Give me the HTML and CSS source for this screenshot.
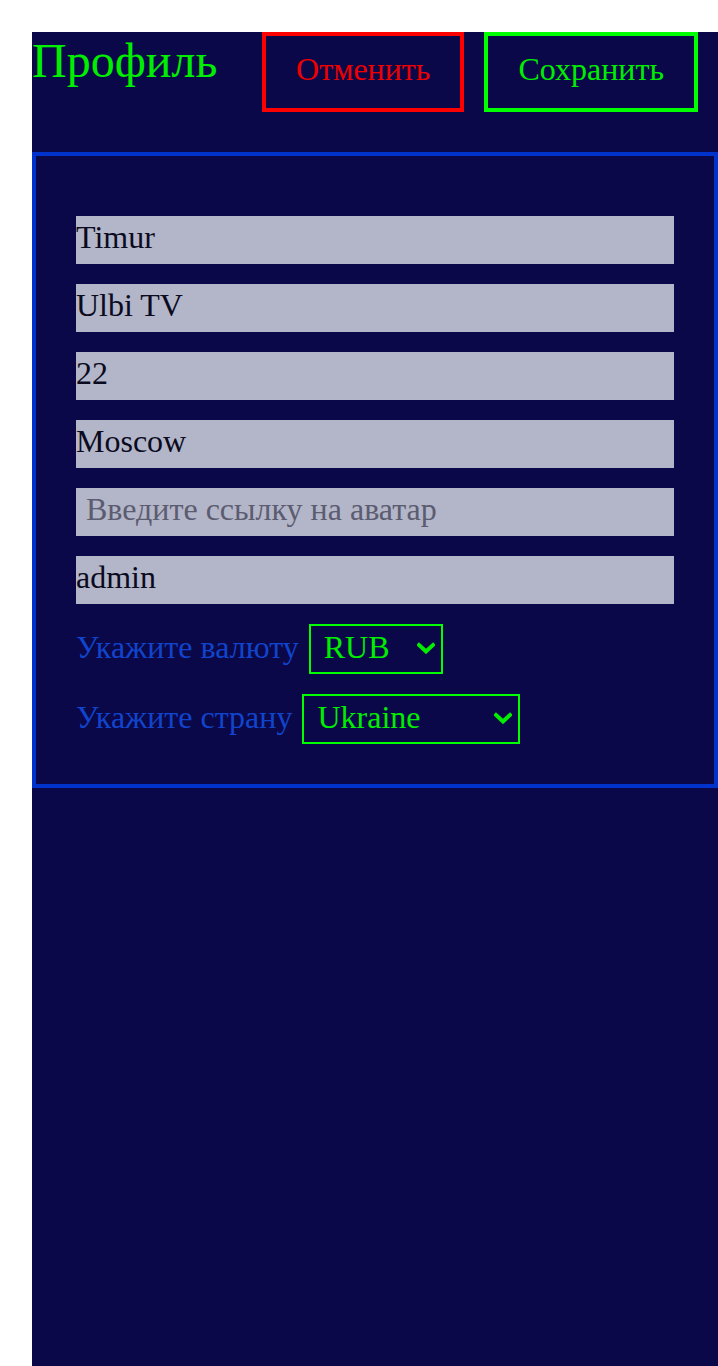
FILE: index.html
```html
<!DOCTYPE html>
<html lang="ru">
<head>
<meta charset="utf-8">
<title>Профиль</title>
<link rel="stylesheet" href="styles.css">
</head>
<body>
<div class="app">
  <div class="header">
    <div class="title">Профиль</div>
    <div class="actions">
      <button class="btn btn-cancel">Отменить</button>
      <button class="btn btn-save">Сохранить</button>
    </div>
  </div>
  <div class="card">
    <input class="field" value="Timur">
    <input class="field" value="Ulbi TV">
    <input class="field" value="22">
    <input class="field" value="Moscow">
    <input class="field field-empty" placeholder="Введите ссылку на аватар">
    <input class="field" value="admin">
    <label class="row">
      <span class="label">Укажите валюту</span>
      <span class="select-wrap">
        <select class="select select-currency">
          <option>RUB</option>
          <option>EUR</option>
          <option>USD</option>
        </select>
        <svg class="chevron" width="18" height="12" viewBox="0 0 18 12"><polyline points="2,3 9,9.5 16,3" fill="none" stroke="#00ee00" stroke-width="4" stroke-linecap="square"/></svg>
      </span>
    </label>
    <label class="row">
      <span class="label">Укажите страну</span>
      <span class="select-wrap">
        <select class="select select-country">
          <option>Ukraine</option>
          <option>Russia</option>
          <option>Belarus</option>
          <option>Kazakhstan</option>
          <option>Armenia</option>
        </select>
        <svg class="chevron" width="18" height="12" viewBox="0 0 18 12"><polyline points="2,3 9,9.5 16,3" fill="none" stroke="#00ee00" stroke-width="4" stroke-linecap="square"/></svg>
      </span>
    </label>
  </div>
</div>
</body>
</html>
```
FILE: styles.css
```css
html, body {
  margin: 0;
  padding: 0;
  background: #ffffff;
}
body {
  font-family: "Liberation Serif", "Times New Roman", serif;
}
.app {
  margin: 32px 0 0 32px;
  min-height: calc(100vh - 32px);
  background: #0a0848;
}
.header {
  display: flex;
  align-items: flex-start;
  height: 80px;
  margin-bottom: 40px;
}
.title {
  font-size: 48px;
  line-height: 1.149;
  color: #00ee00;
  padding-top: 1px;
}
.actions {
  margin-left: auto;
  display: flex;
  gap: 20px;
  padding-right: 20px;
}
.btn {
  box-sizing: border-box;
  height: 80px;
  padding: 0 30px 6px;
  background: transparent;
  font-family: "Liberation Serif", "Times New Roman", serif;
  font-size: 32px;
  cursor: pointer;
}
.btn-cancel {
  border: 4px solid #ff0000;
  color: #ee0000;
}
.btn-save {
  border: 4px solid #00ff00;
  color: #00ee00;
}
.card {
  border: 4px solid #0033cc;
  padding: 60px 40px 40px;
  display: flex;
  flex-direction: column;
  gap: 20px;
}
.field {
  box-sizing: border-box;
  height: 48px;
  width: 100%;
  border: none;
  outline: none;
  padding: 0 0 5px;
  margin: 0;
  background: #b3b5c8;
  color: #0a0a20;
  font-family: "Liberation Serif", "Times New Roman", serif;
  font-size: 32px;
}
.field-empty {
  text-indent: 10px;
}
.field::placeholder {
  color: #5b5c70;
}
.row {
  display: flex;
  align-items: center;
  gap: 10px;
}
.label {
  color: #1144cc;
  font-size: 32px;
  margin-bottom: 4px;
}
.select-wrap {
  position: relative;
  display: flex;
}
.select {
  -webkit-appearance: none;
  appearance: none;
  box-sizing: border-box;
  height: 50px;
  border: 2px solid #00ff00;
  background: transparent;
  color: #00ee00;
  font-family: "Liberation Serif", "Times New Roman", serif;
  font-size: 32px;
  padding: 0 0 4px 13px;
  border-radius: 0;
  outline: none;
}
.select-currency {
  width: 134px;
}
.select-country {
  width: 218px;
}
.select option {
  background: #0a0848;
  color: #00ee00;
}
.chevron {
  position: absolute;
  right: 8px;
  top: 18px;
  pointer-events: none;
}
```
